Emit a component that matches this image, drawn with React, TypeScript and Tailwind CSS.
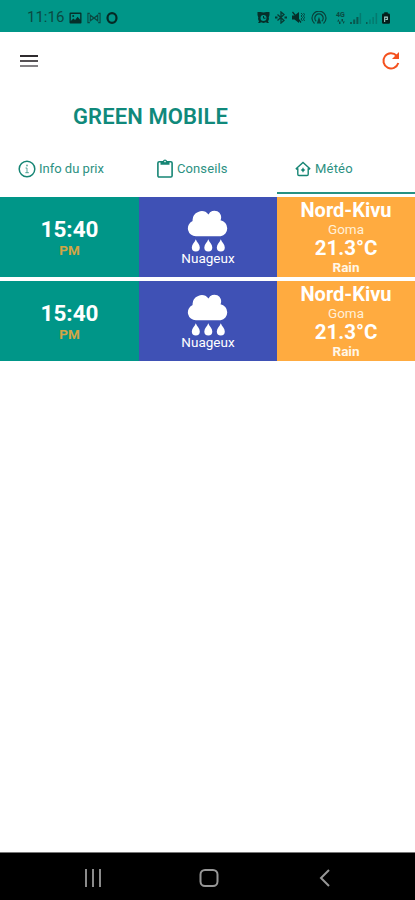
import React from "react";

const forecasts = [
  { id: 1, time: "15:40", period: "PM", sky: "Nuageux", region: "Nord-Kivu", city: "Goma", temp: "21.3°C", condition: "Rain" },
  { id: 2, time: "15:40", period: "PM", sky: "Nuageux", region: "Nord-Kivu", city: "Goma", temp: "21.3°C", condition: "Rain" },
];

const StatusBar = () => (
  <div className="flex h-8 shrink-0 items-center justify-between bg-[#009688] pl-[27px] pr-[25px] pt-[3px] text-[#0b4941]">
    <div className="flex items-center">
      <span className="w-[42px] whitespace-nowrap text-[15px] leading-none">11:16</span>
      {/* Gallery */}
      <svg width="13" height="12" viewBox="0 0 12 12" className="text-[#062f2a]">
        <path fill="currentColor" fillRule="evenodd" d="M1 .5h10a1 1 0 0 1 1 1v9a1 1 0 0 1-1 1H1a1 1 0 0 1-1-1v-9a1 1 0 0 1 1-1zM1.300 2v7l2.500-2.500L5.600 8l2.500-3.300 2.600 3V2H1.300z" />
        <circle cx="3.700" cy="4" r="1" fill="currentColor" />
      </svg>
      <svg width="14" height="12" viewBox="0 0 15 12" className="ml-[5px]" fill="none" stroke="currentColor" strokeWidth="1.200">
        <path d="M3 1H1v10h2M12 1h2v10h-2M3.500 3v6L11.500 3v6L3.500 3z" />
      </svg>
      {/* Opera */}
      <svg width="12" height="12" viewBox="0 0 12 12" className="ml-[5px] text-[#052a25]">
        <ellipse cx="6" cy="6" rx="4.500" ry="4.800" fill="none" stroke="currentColor" strokeWidth="2.200" />
      </svg>
    </div>
    <div className="flex items-center">
      {/* Alarm */}
      <svg width="13" height="13" viewBox="0 0 13 13" className="text-[#062f2a]">
        <path fill="currentColor" fillRule="evenodd" d="M.5 1h3l3 .6L9.500 1h3v3l-.8 2.500.3 1.500-1 2.500 1 1.500H10l-1-.8-2.500.8-2.500-.8-1 .8H1l1-1.500L1 8l.3-1.500L.5 4V1zM6.500 4a3 3 0 1 0 0 6 3 3 0 0 0 0-6z" />
        <path d="M6.500 5v2.200h2" fill="none" stroke="currentColor" />
      </svg>
      {/* Bluetooth */}
      <svg width="12" height="13" viewBox="0 0 12 13" className="ml-[5px] text-[#073a33]" fill="none" stroke="currentColor" strokeWidth="1.300">
        <path d="M2.500 3.500l6.500 6-3 2.500V1l3 2.500-6.500 6" />
        <path d="M0 6.500h2.500M9.500 6.500H12" strokeWidth="1.800" />
      </svg>
      {/* Muted speaker */}
      <svg width="13" height="13" viewBox="0 0 13 13" className="ml-[5px] text-[#062f2a]">
        <path fill="currentColor" d="M0 4.500h2.500L7 1v11L2.500 8.500H0z" />
        <path d="M.5 1L9 11.500" stroke="currentColor" strokeWidth="1.200" />
        <path d="M9 2l1.500 1.500L9 5l1.500 1.500L9 8l1.500 2M11.500 2l1 1.500-1 1.500 1 1.500-1 1.500 1 2" fill="none" stroke="currentColor" strokeWidth=".8" />
      </svg>
      {/* Hotspot */}
      <svg width="16" height="14" viewBox="0 0 16 14" className="ml-[6px] text-[#084039]" fill="none" stroke="currentColor" strokeWidth="1.200">
        <path d="M3.500 12.500a7 7 0 1 1 9 0M5.200 10.300a4.200 4.200 0 1 1 5.600 0" />
        <path d="M8 5.700l2.200 6.800H5.800z" fill="currentColor" stroke="none" />
      </svg>
      <div className="ml-[9px] flex w-[9px] flex-col items-center">
        <span className="text-[7px] font-bold leading-[7px]">4G</span>
        <svg width="8" height="5" viewBox="0 0 8 5" fill="currentColor">
          <path d="M0 2.500L2 0v5h1.500V2.500zM8 2.500L6 5V0H4.500v2.500z" />
        </svg>
      </div>
      <svg width="12" height="12" viewBox="0 0 12 12" className="ml-[5px]" fill="currentColor">
        <path opacity=".8" d="M0 10h2v2H0zM3.200 7.500h2V12h-2zM6.400 5h2v7h-2z" />
        <path opacity=".35" d="M9.600 1h1.500v11H9.600z" />
      </svg>
      <svg width="12" height="12" viewBox="0 0 12 12" className="ml-[4px]" fill="currentColor">
        <path opacity=".8" d="M0 10h1.500v2H0z" />
        <path opacity=".35" d="M3.200 7.500h1.500V12H3.200zM6.400 5h1.500v7H6.400zM9.600 1h1.500v11H9.600z" />
      </svg>
      {/* Battery */}
      <svg width="8" height="12" viewBox="0 0 9 13" className="ml-[4px] text-[#041f1c]">
        <path fill="currentColor" d="M2.500 0h4v1.500h1a1.500 1.500 0 0 1 1.500 1.500v8.500A1.500 1.500 0 0 1 7.500 13h-6A1.500 1.500 0 0 1 0 11.500V3a1.500 1.500 0 0 1 1.500-1.500h1z" />
        <path d="M3 11V5.500h3v2.700H4" fill="none" stroke="#a5d3cd" strokeWidth="1.200" />
      </svg>
    </div>
  </div>
);

const Header = () => (
  <header className="flex h-[58px] shrink-0 items-center justify-between pl-5 pr-[14px]">
    <button aria-label="Menu" className="flex w-[18px] flex-col gap-[3px]">
      <span className="h-[2px] bg-[#2f2b2e]" />
      <span className="h-[2px] bg-[#555154]" />
      <span className="h-[2px] bg-[#858285]" />
    </button>
    <button aria-label="Actualiser">
      <svg width="20" height="20" viewBox="0 0 20 20" fill="none" stroke="#f4511e" strokeWidth="2">
        <path d="M17.300 12A7.600 7.600 0 1 1 15.600 4.700" />
        <path d="M18 1v7h-7z" fill="#f4511e" stroke="none" />
      </svg>
    </button>
  </header>
);

const Tabs = () => (
  <nav className="grid h-[49px] shrink-0 grid-cols-[139px_138px_138px] text-[13px] text-[#2c9182]">
    <button className="flex items-center gap-[3px] border-b-2 border-transparent pl-[18px]">
      <svg width="18" height="18" viewBox="0 0 18 18" fill="none" stroke="#168574">
        <circle cx="9" cy="9" r="7.800" strokeWidth="1.500" />
        <path d="M7.500 8h1.500v4.700M7.300 12.700h3.600" strokeWidth="1" opacity=".7" />
        <circle cx="9" cy="5.500" r=".9" fill="#168574" stroke="none" opacity=".7" />
      </svg>
      <span>Info du prix</span>
    </button>
    <button className="flex items-center gap-1 border-b-2 border-transparent pl-[18px]">
      <svg width="16" height="19" viewBox="0 0 16 19" fill="none" stroke="#168574">
        <rect x=".9" y="2.800" width="14.200" height="15.200" rx="1.300" strokeWidth="1.600" />
        <path d="M3.500 2.200h2.300a2.300 2.300 0 0 1 4.400 0h2.300v3.500h-9z" fill="#168574" stroke="none" />
        <circle cx="8" cy="2.600" r=".8" fill="#fff" stroke="none" />
      </svg>
      <span className="tracking-[0.1px]">Conseils</span>
    </button>
    <button className="flex items-center gap-1 border-b-2 border-[#269184] pl-[18px]">
      <svg width="16" height="16" viewBox="0 0 16 16" fill="none" stroke="#168574" strokeWidth="1.400">
        <path d="M.8 8L8 1.500 15.200 8M.8 8h2v5.300c0 .7.400 1.200 1.200 1.200h8c.8 0 1.200-.5 1.200-1.200V8h2" />
        <path d="M8 6.300l.9 1.800 1.500.9-1.500.9L8 11.700l-.9-1.800L5.600 9l1.500-.9z" fill="#168574" stroke="none" />
      </svg>
      <span className="tracking-[0.2px]">Météo</span>
    </button>
  </nav>
);

const RainCloud = () => (
  <svg width="42" height="42" viewBox="0 0 42 42" fill="currentColor" className="shrink-0">
    <path d="M9 26.300A8 8 0 0 1 5.600 11 9 9 0 0 1 21.500 4.500 6.500 6.500 0 0 1 33.500 10.200 8.200 8.200 0 0 1 33.700 26.300z" />
    <path d="M8.800 29.300c1 3 4 5.200 4 8.300a4 4 0 0 1-8 0c0-3.100 3-5.300 4-8.300zM21.300 29.300c1 3 4 5.200 4 8.300a4 4 0 0 1-8 0c0-3.100 3-5.300 4-8.300zM33.800 29.300c1 3 4 5.200 4 8.300a4 4 0 0 1-8 0c0-3.100 3-5.300 4-8.300z" />
  </svg>
);

const ForecastRow = ({ item }: { item: (typeof forecasts)[number] }) => (
  <div className="grid h-20 grid-cols-[139px_138px_138px] text-center text-white">
    <div className="flex flex-col items-center justify-center bg-[#009688] pt-[3px]">
      <span className="text-[22.500px] font-bold leading-[23px]">{item.time}</span>
      <span className="text-[13.500px] font-bold leading-[19px] text-[#d3a544]">{item.period}</span>
    </div>
    <div className="flex flex-col items-center bg-[#3f51b5] pt-[13px]">
      <RainCloud />
      <span className="text-[13.500px] leading-[12px]">{item.sky}</span>
    </div>
    <div className="flex flex-col items-center bg-[#ffab40] pt-[2px]">
      <span className="text-[20px] font-bold leading-[23px]">{item.region}</span>
      <span className="text-[13.500px] leading-[15px] text-[#fff0d9]">{item.city}</span>
      <span className="text-[20.500px] font-bold leading-[23px]">{item.temp}</span>
      <span className="text-[13.500px] font-bold leading-[15px] text-[#fff7e8]">{item.condition}</span>
    </div>
  </div>
);

const NavigationBar = () => (
  <div className="flex h-12 shrink-0 items-center justify-between border-t border-[#777] bg-black pl-[84px] pr-[84px] pt-[2px]">
    <svg width="18" height="18" viewBox="0 0 18 18" stroke="#8b8b8b" strokeWidth="2">
      <path d="M2 0v18M9 0v18M16 0v18" />
    </svg>
    <svg width="20" height="18" viewBox="0 0 20 18" fill="none" stroke="#979797" strokeWidth="2" className="mr-1">
      <rect x="1.500" y="1" width="17" height="16" rx="4.500" />
    </svg>
    <svg width="12" height="18" viewBox="0 0 12 18" fill="none" stroke="#979797" strokeWidth="2">
      <path d="M10 1L2 9l8 8" />
    </svg>
  </div>
);

const App = () => {
  return (
    <div className="flex h-[900px] w-[415px] flex-col overflow-hidden bg-white font-[Roboto,sans-serif]">
      <StatusBar />
      <Header />
      <h1 className="h-[55px] shrink-0 pl-[73px] pt-[14px] text-[22px] font-semibold leading-[26px] tracking-[0.1px] text-[#10897b]">
        GREEN MOBILE
      </h1>
      <Tabs />
      <main className="flex flex-1 flex-col gap-1 pt-[3px]">
        {forecasts.map((item) => (
          <ForecastRow key={item.id} item={item} />
        ))}
      </main>
      <NavigationBar />
    </div>
  );
};

export default App;
